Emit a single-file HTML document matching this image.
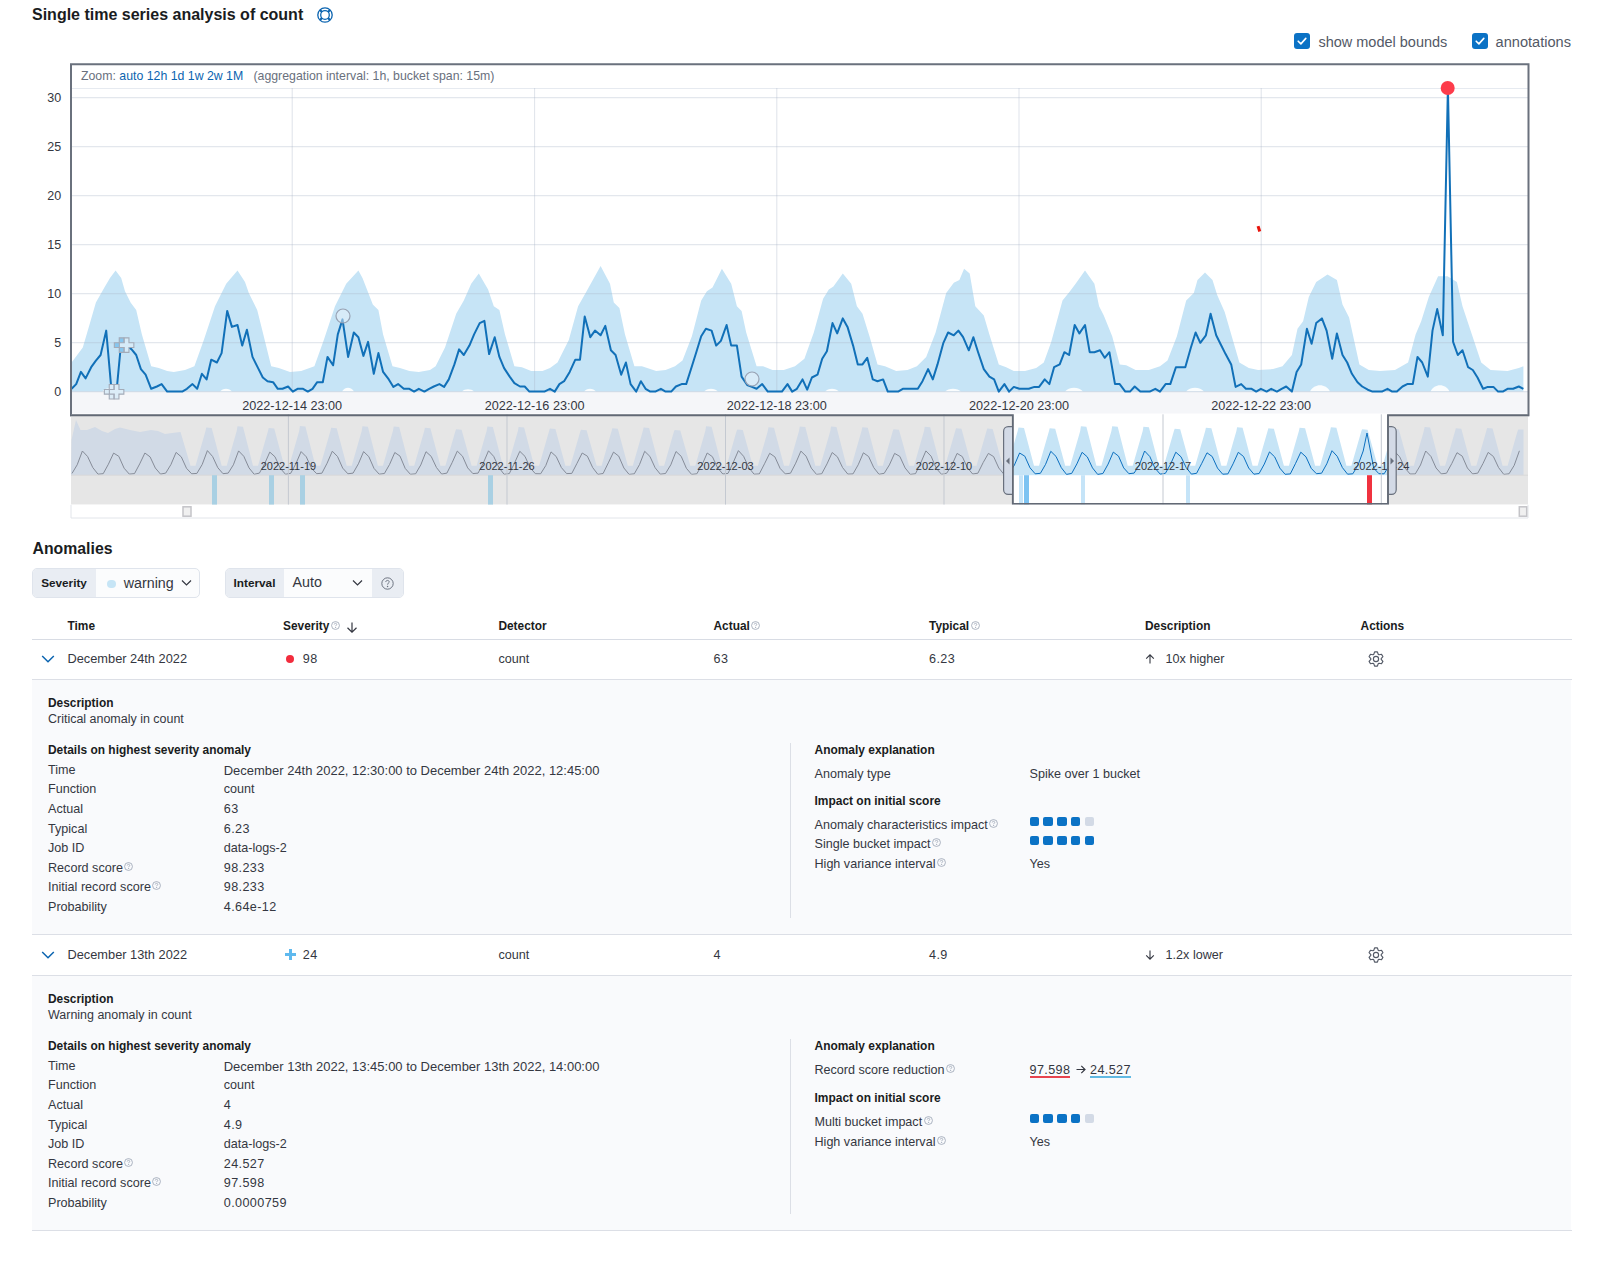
<!DOCTYPE html>
<html><head><meta charset="utf-8"><title>Single time series analysis</title>
<style>
html,body{margin:0;padding:0;background:#ffffff;width:1600px;height:1275px;overflow:hidden;position:relative}
body{font-family:'Liberation Sans', sans-serif}
.t{position:absolute;white-space:nowrap;line-height:1;font-family:'Liberation Sans', sans-serif}
svg text{font-family:'Liberation Sans', sans-serif}
</style></head><body>
<div class="t" style="left:32.00px;top:7.00px;font-size:16px;font-weight:bold;color:#1a1c21;">Single time series analysis of count</div>
<svg style="position:absolute;left:316px;top:6px" width="18" height="18" viewBox="0 0 18 18"><circle cx="9" cy="9" r="7.2" fill="none" stroke="#0b64b0" stroke-width="1.3"/><circle cx="9" cy="9" r="4.3" fill="none" stroke="#0b64b0" stroke-width="1.3"/><path d="M4,4 L6,6 M14,4 L12,6 M4,14 L6,12 M14,14 L12,12" stroke="#0b64b0" stroke-width="2.2"/></svg>
<svg style="position:absolute;left:1294px;top:33px" width="16" height="16" viewBox="0 0 16 16"><rect x="0" y="0" width="16" height="16" rx="3" fill="#0b72c5"/><path d="M4.2,8.2 L6.9,10.9 L11.8,5.4" fill="none" stroke="#fff" stroke-width="1.6" stroke-linecap="round" stroke-linejoin="round"/></svg>
<div class="t" style="left:1318.40px;top:35.00px;font-size:14.5px;font-weight:normal;color:#535966;">show model bounds</div>
<svg style="position:absolute;left:1471.5px;top:33px" width="16" height="16" viewBox="0 0 16 16"><rect x="0" y="0" width="16" height="16" rx="3" fill="#0b72c5"/><path d="M4.2,8.2 L6.9,10.9 L11.8,5.4" fill="none" stroke="#fff" stroke-width="1.6" stroke-linecap="round" stroke-linejoin="round"/></svg>
<div class="t" style="left:1495.60px;top:35.00px;font-size:14.58px;font-weight:normal;color:#535966;">annotations</div>
<svg width="1600" height="525" viewBox="0 0 1600 525" style="position:absolute;left:0;top:0">
<rect x="71" y="391.5" width="1457" height="22" fill="#f5f6f9"/>
<path d="M71.6,391.6 L71.6,362.5 L82.8,347.5 L89.4,325 L95.9,302.5 L104.4,287.5 L110,278.1 L115.6,270.6 L121.2,278.1 L125,291.2 L130.6,302.5 L136.2,310 L141.9,334.4 L151.2,366.2 L158.8,368.1 L167.2,370.9 L173.8,371.9 L185,370 L194.4,366.2 L203.8,340 L215,306.2 L226.2,283.8 L237.5,270.6 L245,281.9 L248.8,293.1 L257.2,310 L261.9,328.8 L271.2,366.2 L278.8,368.1 L290,371.9 L301.2,370.9 L314.4,366.2 L323.8,340 L335,306.2 L346.2,283.8 L358.4,270.6 L362.5,278.1 L372.8,304.4 L378.4,310 L383.1,334.4 L392.5,366.2 L400,368.1 L409.4,370.9 L418.8,371.9 L430,370 L435.6,366.2 L445,347.5 L456.2,313.8 L463.8,300.6 L471.2,283.8 L478.8,273.4 L488.1,289.4 L493.8,306.2 L499.4,310 L505,334.4 L514.4,366.2 L521.9,367.2 L531.2,370.9 L542.5,370.9 L550,368.1 L557.5,362.5 L568.8,340 L578.1,306.2 L585.6,293.1 L600.6,265.9 L610,283.8 L613.8,302.5 L619.4,308.1 L625,334.4 L634.4,366.2 L641.9,366.2 L656.2,370.9 L665.6,370 L675,366.2 L682.5,360.6 L691.9,336.2 L701.2,300.6 L706.9,291.2 L712.5,287.5 L721.9,268.8 L731.2,283.8 L736.9,306.2 L741.6,310.9 L746.2,332.5 L756.6,366.2 L763.1,366.2 L772.5,370 L783.8,370 L795,366.2 L804.4,358.8 L813.8,332.5 L823.1,298.8 L828.8,289.4 L833.4,286.6 L842.8,273.4 L851.2,283.8 L856.9,306.2 L862.5,313.8 L870,338.1 L877.5,364.4 L885,366.2 L896.2,370.9 L907.5,370 L916.9,366.2 L926.2,356.9 L935.6,332.5 L946.2,293.1 L953.8,282.8 L959.4,280 L964.1,268.8 L969.7,273.4 L975.3,306.2 L983.8,315.6 L989.4,334.4 L998.8,364.4 L1006.2,367.2 L1013.8,370.9 L1025,370.9 L1036.2,368.1 L1043.8,362.5 L1051.2,341.9 L1062.5,300.6 L1070,291.2 L1075.6,283.8 L1085,270.6 L1094.4,283.8 L1099.1,306.2 L1103.8,315.6 L1112.2,336.2 L1119.7,364.4 L1126.2,365.3 L1135.6,370 L1148.8,370 L1160,366.2 L1167.5,360.6 L1176.9,336.2 L1186.2,300.6 L1193.8,293.1 L1197.5,280 L1205,272.5 L1212.5,280 L1217.2,295 L1224.7,311.9 L1239.4,362.5 L1248.8,368.1 L1258.1,370 L1273.1,369.1 L1282.5,366.2 L1291.9,355 L1297.5,328.8 L1303.1,321.2 L1308.8,296.9 L1316.2,281.9 L1327.5,274.4 L1336.9,280 L1342.5,304.4 L1349.1,317.5 L1359.4,364.4 L1368.8,370 L1380,370.9 L1395,370 L1408.1,362.5 L1415.6,334.4 L1421.2,321.2 L1428.8,296.9 L1438.1,276.2 L1447.5,276.2 L1456.9,281.9 L1462.5,306.2 L1471.9,334.4 L1481.2,362.5 L1490.6,370 L1507.5,370.9 L1518.8,368.1 L1523.4,366.2 L1523.4,391.6Z" fill="#c6e4f6"/>
<path d="M102,391.6 C105.2,387.05 114.8,387.05 118,391.6 Z" fill="#ffffff" opacity="0.9"/>
<path d="M220,391.6 C222.4,387.70000000000005 229.6,387.70000000000005 232,391.6 Z" fill="#ffffff" opacity="0.9"/>
<path d="M342,391.6 C344.4,386.40000000000003 351.6,386.40000000000003 354,391.6 Z" fill="#ffffff" opacity="0.9"/>
<path d="M462,391.6 C464.4,388.35 471.6,388.35 474,391.6 Z" fill="#ffffff" opacity="0.9"/>
<path d="M584,391.6 C586.4,387.70000000000005 593.6,387.70000000000005 596,391.6 Z" fill="#ffffff" opacity="0.9"/>
<path d="M704,391.6 C706.8,387.70000000000005 715.2,387.70000000000005 718,391.6 Z" fill="#ffffff" opacity="0.9"/>
<path d="M825,391.6 C827.8,387.70000000000005 836.2,387.70000000000005 839,391.6 Z" fill="#ffffff" opacity="0.9"/>
<path d="M945,391.6 C948.2,387.70000000000005 957.8,387.70000000000005 961,391.6 Z" fill="#ffffff" opacity="0.9"/>
<path d="M1065,391.6 C1068.6,386.40000000000003 1079.4,386.40000000000003 1083,391.6 Z" fill="#ffffff" opacity="0.9"/>
<path d="M1186,391.6 C1189.6,386.40000000000003 1200.4,386.40000000000003 1204,391.6 Z" fill="#ffffff" opacity="0.9"/>
<path d="M1310,391.6 C1314.0,383.15000000000003 1326.0,383.15000000000003 1330,391.6 Z" fill="#ffffff" opacity="0.9"/>
<path d="M1430.5,391.6 C1434.3,383.15000000000003 1445.7,383.15000000000003 1449.5,391.6 Z" fill="#ffffff" opacity="0.9"/>
<line x1="71" y1="391.6" x2="1528" y2="391.6" stroke="#a9b6c9" stroke-opacity="0.33" stroke-width="1.2"/>
<line x1="71" y1="342.6" x2="1528" y2="342.6" stroke="#a9b6c9" stroke-opacity="0.33" stroke-width="1.2"/>
<line x1="71" y1="293.6" x2="1528" y2="293.6" stroke="#a9b6c9" stroke-opacity="0.33" stroke-width="1.2"/>
<line x1="71" y1="244.6" x2="1528" y2="244.6" stroke="#a9b6c9" stroke-opacity="0.33" stroke-width="1.2"/>
<line x1="71" y1="195.6" x2="1528" y2="195.6" stroke="#a9b6c9" stroke-opacity="0.33" stroke-width="1.2"/>
<line x1="71" y1="146.6" x2="1528" y2="146.6" stroke="#a9b6c9" stroke-opacity="0.33" stroke-width="1.2"/>
<line x1="71" y1="97.6" x2="1528" y2="97.6" stroke="#a9b6c9" stroke-opacity="0.33" stroke-width="1.2"/>
<line x1="71" y1="88.5" x2="1528" y2="88.5" stroke="#e6eaf0" stroke-width="1"/>
<line x1="292.2" y1="88" x2="292.2" y2="391.6" stroke="#a9b6c9" stroke-opacity="0.38" stroke-width="1"/>
<line x1="534.6" y1="88" x2="534.6" y2="391.6" stroke="#a9b6c9" stroke-opacity="0.38" stroke-width="1"/>
<line x1="776.8" y1="88" x2="776.8" y2="391.6" stroke="#a9b6c9" stroke-opacity="0.38" stroke-width="1"/>
<line x1="1019" y1="88" x2="1019" y2="391.6" stroke="#a9b6c9" stroke-opacity="0.38" stroke-width="1"/>
<line x1="1261.2" y1="88" x2="1261.2" y2="391.6" stroke="#a9b6c9" stroke-opacity="0.38" stroke-width="1"/>
<path d="M71.6,388.8 L76.2,384.1 L80.9,371.9 L85.6,378.4 L91.2,367.2 L95.9,360.6 L100.6,355 L106.2,330.6 L111.5,390.6 L116.6,390.6 L121.2,341.9 L126.9,345.6 L131.6,349.4 L136.2,355 L140.9,369.1 L145.6,374.7 L151.2,388.8 L156.9,386.5 L161.6,384.1 L167.2,391.6 L171.9,391.6 L177.5,391.6 L182.2,391.6 L186.9,388.8 L192.5,384.1 L197.2,388.8 L201.9,373.8 L206.6,379.4 L211.2,359.7 L216.9,362.5 L221.6,353.1 L227.2,310.9 L231.9,326.9 L237.5,325 L242.2,345.6 L246.9,329.7 L252.5,356.9 L258.1,368.1 L262.8,377.5 L267.5,381.2 L273.1,382.2 L277.8,388.8 L282.5,388.8 L288.1,386.5 L292.8,391.6 L297.5,388.8 L303.1,388.8 L307.8,391.6 L312.5,388.8 L317.2,382.2 L322.8,382.2 L327.5,356.9 L333.1,365.3 L337.8,334.4 L342.5,319.4 L348.1,356.9 L353.8,332.5 L358.4,337.2 L363.4,355.9 L368.1,341.9 L373.8,373.8 L378.4,353.1 L383.1,371.9 L388.8,379.4 L393.4,386.9 L398.1,384.1 L403.8,388.8 L409.4,388.8 L414.1,391.6 L418.8,388.8 L424.4,391.6 L429.1,388.8 L433.8,386.5 L439.4,384.1 L444.1,386.9 L448.8,379.4 L454.4,364.4 L459.1,349.4 L463.8,355 L469.4,345.6 L474.1,334.4 L479.7,323.1 L484.4,320.9 L489.1,354.1 L494.7,337.2 L499.4,356.9 L504.1,368.1 L509.7,376.6 L514.4,383.1 L520,386.5 L524.7,386.5 L529.4,391.6 L535,391.6 L539.7,391.6 L544.4,391.6 L550,388.8 L554.7,391.6 L559.4,384.1 L564.1,381.2 L569.7,371.9 L575.3,359.7 L580,359.7 L584.7,316.6 L590.3,337.2 L595,330.6 L600.6,335.3 L605.3,325.9 L610.9,350.3 L615.6,355 L621.2,374.7 L625.9,362.5 L630.6,384.1 L636.2,391.6 L640.9,381.2 L645.6,388.8 L650.3,391.6 L655.3,391.6 L660.9,388.8 L665.6,391.6 L671.2,391.6 L675.9,386.5 L681.6,384.1 L686.2,384.1 L691.9,366.2 L696.6,351.2 L701.2,336.2 L705.9,328.8 L711.6,330.6 L716.2,345.6 L720.9,340.9 L726.6,325 L731.2,345.6 L736.9,345.6 L741.6,376.6 L747.2,385 L751.9,386.9 L756.6,388.8 L762.2,384.1 L767.8,391.6 L772.5,391.6 L777.2,391.6 L781.9,391.6 L787.5,384.1 L792.2,391.6 L796.9,388.8 L802.5,379.4 L807.2,389.7 L811.9,377.5 L817.5,374.7 L822.2,358.8 L826.9,351.2 L832.5,323.1 L837.2,333.4 L842.8,318.4 L847.5,326.9 L853.1,345.6 L857.8,364.4 L862.5,364.4 L867.2,357.8 L872.8,379.4 L877.5,381.2 L883.1,379.4 L887.8,391.6 L892.5,391.6 L898.1,391.6 L902.8,388.8 L907.5,388.8 L913.1,388.8 L917.8,388.8 L922.5,381.2 L928.1,369.1 L932.8,379.4 L937.5,364.4 L943.4,342.8 L948.1,332.5 L953.8,335.3 L958.4,330.6 L963.1,337.2 L968.8,350.3 L973.4,337.2 L978.1,352.2 L983.8,369.1 L989.4,376.6 L994.1,379.4 L998.8,391.6 L1004.4,384.1 L1009.1,391.6 L1013.8,386.9 L1019.4,388.8 L1024.1,388.8 L1028.8,388.8 L1034.4,386.9 L1039.1,386.9 L1044.7,379.4 L1049.4,384.1 L1054.1,367.2 L1059.7,364.4 L1064.4,352.2 L1069.1,355 L1074.7,325 L1079.4,333.4 L1085,325 L1089.7,352.2 L1094.4,352.2 L1100,350.3 L1104.7,357.8 L1109.4,352.2 L1115,384.1 L1119.7,384.1 L1125.3,391.6 L1130,391.6 L1134.7,386.5 L1140.3,391.6 L1145,391.6 L1149.7,391.6 L1155.3,388.8 L1160,391.6 L1165.6,384.1 L1170.3,384.1 L1175.9,367.2 L1180.6,367.2 L1185.3,367.2 L1190.9,347.5 L1195.6,332.5 L1200.3,342.8 L1205.9,335.3 L1210.6,313.8 L1216.2,335.3 L1220.9,344.7 L1225.6,354.1 L1231.2,364.4 L1235.6,386.9 L1241.2,384.1 L1245.9,388.8 L1251.6,388.8 L1256.2,391.6 L1260.9,388.8 L1266.6,391.6 L1271.2,388.8 L1276.9,391.6 L1281.6,388.8 L1286.2,386.5 L1291.9,391.6 L1296.6,371.9 L1301.2,364.4 L1306.9,328.8 L1311.6,343.8 L1316.2,323.1 L1321.9,318.4 L1326.6,330.6 L1332.2,358.8 L1336.9,333.4 L1342.5,355 L1347.2,362.5 L1351.9,373.8 L1357.5,382.2 L1362.2,386.5 L1367.8,389.7 L1372.5,391.6 L1377.2,391.6 L1381.9,391.6 L1387.5,388.8 L1392.2,391.6 L1396.9,391.6 L1402.5,386.5 L1407.2,384.1 L1412.8,384.1 L1417.5,356.9 L1422.2,362.5 L1427.8,376.6 L1432.5,330.6 L1437.2,309.1 L1442.8,335.3 L1447.9,87.2 L1453.1,341.9 L1457.8,355 L1462.5,350.3 L1468.1,367.2 L1472.8,370 L1477.5,377.5 L1483.1,388.8 L1487.8,386.9 L1493.4,386.9 L1498.1,391.6 L1502.8,391.6 L1507.5,388.8 L1513.1,388.8 L1518.8,386.5 L1523.4,388.8" fill="none" stroke="#1170b8" stroke-width="2" stroke-linejoin="round"/>
<circle cx="343" cy="316" r="7" fill="#e9f2f9" fill-opacity="0.5" stroke="#98a2b3" stroke-width="1.2"/>
<circle cx="752" cy="379" r="7" fill="#e9f2f9" fill-opacity="0.5" stroke="#98a2b3" stroke-width="1.2"/>
<path d="M109.25,384.55 H113.94999999999999 V389.45 H118.85 V394.15000000000003 H113.94999999999999 V399.05 H109.25 V394.15000000000003 H104.35 V389.45 H109.25 Z" fill="#dcedf8" stroke="#a3abb8" stroke-width="1.1"/>
<path d="M114.25,384.55 H118.94999999999999 V389.45 H123.85 V394.15000000000003 H118.94999999999999 V399.05 H114.25 V394.15000000000003 H109.35 V389.45 H114.25 Z" fill="#dcedf8" stroke="#a3abb8" stroke-width="1.1"/>
<path d="M119.25,337.85 H123.94999999999999 V342.75 H128.85 V347.45000000000005 H123.94999999999999 V352.35 H119.25 V347.45000000000005 H114.35 V342.75 H119.25 Z" fill="#86c6ef" stroke="#a3abb8" stroke-width="1.1"/>
<path d="M124.25,337.85 H128.95 V342.75 H133.85 V347.45000000000005 H128.95 V352.35 H124.25 V347.45000000000005 H119.35 V342.75 H124.25 Z" fill="#d6ebf8" stroke="#a3abb8" stroke-width="1.1"/>
<circle cx="1447.7" cy="88" r="7" fill="#fd3c4b"/>
<path d="M1256.6,226.6 l2.9,-0.8 l1.7,5.3 l-2.9,0.9 Z" fill="#e8140c"/>
<path d="M71,416.2 V64.3 H1528.5 V416.2" fill="none" stroke="#6a717d" stroke-width="2"/>
<defs><clipPath id="cin"><rect x="1013" y="414.3" width="375" height="90.5"/></clipPath>
<clipPath id="cout"><path d="M71,414.3 H1013 V504.8 H71 Z M1388,414.3 H1528 V504.8 H1388 Z"/></clipPath></defs>
<g clip-path="url(#cout)"><rect x="71" y="414.3" width="1457" height="90.5" fill="#e6e6e6"/><path d="M71,475.2 L71.5,440 L76,420 L80.5,430 L87,430 L95,427 L102,431 L108,433 L115,429 L120,427.5 L130,430 L140,432 L151,430 L158,431 L165,434 L172,433 L180.5,432 L190.5,465.7 L195.5,465.7 L205.5,431 L206.2,427.5 L211.7,428 L221.7,465.7 L226.7,465.7 L236.7,431 L237.5,426.2 L243,426.7 L253,465.7 L258,465.7 L268,431 L268.7,428 L274.2,428.5 L284.2,465.7 L289.2,465.7 L299.2,431 L299.9,426.1 L305.4,426.6 L315.4,465.7 L320.4,465.7 L330.4,431 L331.2,427.7 L336.7,428.2 L346.7,465.7 L351.7,465.7 L361.7,431 L362.4,426.3 L367.9,426.8 L377.9,465.7 L382.9,465.7 L392.9,431 L393.7,426.4 L399.2,426.9 L409.2,465.7 L414.2,465.7 L424.2,431 L424.9,427.7 L430.4,428.2 L440.4,465.7 L445.4,465.7 L455.4,431 L456.1,429.3 L461.6,429.8 L471.6,465.7 L476.6,465.7 L486.6,431 L487.4,426.5 L492.9,427 L502.9,465.7 L507.9,465.7 L517.9,431 L518.6,426.9 L524.1,427.4 L534.1,465.7 L539.1,465.7 L549.1,431 L549.9,428.5 L555.4,429 L565.4,465.7 L570.4,465.7 L580.4,431 L581.1,429.8 L586.6,430.3 L596.6,465.7 L601.6,465.7 L611.6,431 L612.3,428.3 L617.8,428.8 L627.8,465.7 L632.8,465.7 L642.8,431 L643.6,427.6 L649.1,428.1 L659.1,465.7 L664.1,465.7 L674.1,431 L674.8,429.9 L680.3,430.4 L690.3,465.7 L695.3,465.7 L705.3,431 L706.1,426.2 L711.6,426.7 L721.6,465.7 L726.6,465.7 L736.6,431 L737.3,429.4 L742.8,429.9 L752.8,465.7 L757.8,465.7 L767.8,431 L768.5,427.2 L774,427.7 L784,465.7 L789,465.7 L799,431 L799.8,426.6 L805.3,427.1 L815.3,465.7 L820.3,465.7 L830.3,431 L831,426.5 L836.5,427 L846.5,465.7 L851.5,465.7 L861.5,431 L862.3,427.2 L867.8,427.7 L877.8,465.7 L882.8,465.7 L892.8,431 L893.5,429.3 L899,429.8 L909,465.7 L914,465.7 L924,431 L924.7,426.7 L930.2,427.2 L940.2,465.7 L945.2,465.7 L955.2,431 L956,428.3 L961.5,428.8 L971.5,465.7 L976.5,465.7 L986.5,431 L987.2,428.6 L992.7,429.1 L1002.7,465.7 L1007.7,465.7 L1017.7,431 L1018.5,427.5 L1024,428 L1034,465.7 L1039,465.7 L1049,431 L1049.7,428.2 L1055.2,428.7 L1065.2,465.7 L1070.2,465.7 L1080.2,431 L1080.9,426.3 L1086.4,426.8 L1096.4,465.7 L1101.4,465.7 L1111.4,431 L1112.2,426.2 L1117.7,426.7 L1127.7,465.7 L1132.7,465.7 L1142.7,431 L1143.4,426.8 L1148.9,427.3 L1158.9,465.7 L1163.9,465.7 L1173.9,431 L1174.7,428.7 L1180.2,429.2 L1190.2,465.7 L1195.2,465.7 L1205.2,431 L1205.9,427.7 L1211.4,428.2 L1221.4,465.7 L1226.4,465.7 L1236.4,431 L1237.1,427.3 L1242.6,427.8 L1252.6,465.7 L1257.6,465.7 L1267.6,431 L1268.4,428.3 L1273.9,428.8 L1283.9,465.7 L1288.9,465.7 L1298.9,431 L1299.6,427.8 L1305.1,428.3 L1315.1,465.7 L1320.1,465.7 L1330.1,431 L1330.9,427.2 L1336.4,427.7 L1346.4,465.7 L1351.4,465.7 L1361.4,431 L1362.1,429.2 L1367.6,429.7 L1377.6,465.7 L1382.6,465.7 L1392.6,431 L1393.3,428.8 L1398.8,429.3 L1408.8,465.7 L1413.8,465.7 L1423.8,431 L1424.6,427 L1430.1,427.5 L1440.1,465.7 L1445.1,465.7 L1455.1,431 L1455.8,428.3 L1461.3,428.8 L1471.3,465.7 L1476.3,465.7 L1486.3,431 L1487.1,428.1 L1492.6,428.6 L1502.6,465.7 L1507.6,465.7 L1517.6,431 L1518.3,429.5 L1523.5,429.5 L1523.5,475.2Z" fill="#d1dae6"/><path d="M72,473.4 L77.2,464.8 L82.4,451 L87.6,456.5 L92.8,467.6 L98,474.2 L103.2,473.7 L108.4,464.2 L113.6,453.1 L118.8,456.3 L124.1,468.2 L129.3,474.1 L134.5,473.6 L139.7,463.9 L144.9,453 L150.1,456.9 L155.3,468 L160.5,474.1 L165.7,473.1 L170.9,464.6 L176.1,452.4 L181.3,456.9 L186.5,468.3 L191.7,473.8 L196.9,473.4 L202.2,464.5 L207.4,450.6 L212.6,456.5 L217.8,467.7 L223,473.7 L228.2,473.1 L233.4,464.8 L238.6,450.9 L243.8,456.3 L249,467.9 L254.2,474.3 L259.4,473.1 L264.6,463.8 L269.8,452.1 L275,456.8 L280.3,468.3 L285.5,474.3 L290.7,473.3 L295.9,463.7 L301.1,451.6 L306.3,456.8 L311.5,468.4 L316.7,473.7 L321.9,473.2 L327.1,463.2 L332.3,451.2 L337.5,456.5 L342.7,468.1 L347.9,473.8 L353.1,473.1 L358.4,463.8 L363.6,451.6 L368.8,456.6 L374,468.4 L379.2,474.2 L384.4,473.5 L389.6,464.4 L394.8,452.5 L400,456.1 L405.2,468.4 L410.4,474.3 L415.6,473.8 L420.8,464.9 L426,451.7 L431.2,456.4 L436.5,467.6 L441.7,474.1 L446.9,473.1 L452.1,462.7 L457.3,451.1 L462.5,456.2 L467.7,467.9 L472.9,473.6 L478.1,473.1 L483.3,463 L488.5,450.8 L493.7,456.4 L498.9,467.6 L504.1,474.3 L509.3,473.6 L514.6,462.9 L519.8,451.3 L525,456.4 L530.2,467.9 L535.4,473.7 L540.6,473.8 L545.8,465.5 L551,451.9 L556.2,456.5 L561.4,467.6 L566.6,473.6 L571.8,473.4 L577,463.3 L582.2,453 L587.4,456.2 L592.7,467.6 L597.9,474.4 L603.1,473.5 L608.3,462.9 L613.5,452.1 L618.7,456.1 L623.9,468 L629.1,474.4 L634.3,473.8 L639.5,464.6 L644.7,451.3 L649.9,456.4 L655.1,467.7 L660.3,474.2 L665.5,473.5 L670.8,464.8 L676,451.5 L681.2,456.3 L686.4,468.3 L691.6,474.4 L696.8,473.8 L702,464.9 L707.2,453 L712.4,456.7 L717.6,467.8 L722.8,474 L728,473.4 L733.2,462.6 L738.4,450.6 L743.6,456.3 L748.9,467.8 L754.1,474.2 L759.3,473.9 L764.5,463.8 L769.7,453.3 L774.9,456.9 L780.1,468.4 L785.3,473.9 L790.5,473.2 L795.7,463.2 L800.9,451.1 L806.1,456.2 L811.3,468.1 L816.5,474.4 L821.7,473.8 L827,463.9 L832.2,452.5 L837.4,456.8 L842.6,467.6 L847.8,474.1 L853,473.9 L858.2,464.8 L863.4,452.8 L868.6,456.5 L873.8,467.7 L879,474.3 L884.2,473.3 L889.4,464.9 L894.6,453.4 L899.8,456.4 L905.1,467.9 L910.3,474.4 L915.5,473.7 L920.7,463 L925.9,450.9 L931.1,456.2 L936.3,468.4 L941.5,474.3 L946.7,473.2 L951.9,465 L957.1,453.4 L962.3,456.6 L967.5,467.9 L972.7,474 L977.9,473.2 L983.2,462.5 L988.4,453.4 L993.6,456.6 L998.8,468 L1004,474.4 L1009.2,473.4 L1014.4,465.1 L1019.6,453 L1024.8,456.2 L1030,467.8 L1035.2,473.8 L1040.4,473.3 L1045.6,464.3 L1050.8,451.3 L1056,456.4 L1061.3,467.7 L1066.5,474.4 L1071.7,473.4 L1076.9,463.9 L1082.1,452.3 L1087.3,456.9 L1092.5,467.9 L1097.7,474.4 L1102.9,473.5 L1108.1,464.1 L1113.3,452.1 L1118.5,456.1 L1123.7,467.9 L1128.9,473.7 L1134.1,473.1 L1139.4,464.9 L1144.6,451 L1149.8,456.5 L1155,468.2 L1160.2,474.1 L1165.4,473.3 L1170.6,464.1 L1175.8,452.2 L1181,456.8 L1186.2,467.6 L1191.4,474.1 L1196.6,473.3 L1201.8,463.3 L1207,452.8 L1212.2,456.5 L1217.5,468.1 L1222.7,474.2 L1227.9,473.9 L1233.1,463.8 L1238.3,452.3 L1243.5,456.5 L1248.7,468 L1253.9,474.2 L1259.1,473.5 L1264.3,464.1 L1269.5,451.9 L1274.7,456.9 L1279.9,468.2 L1285.1,474.3 L1290.3,473.9 L1295.6,463.3 L1300.8,452.2 L1306,456.9 L1311.2,468.3 L1316.4,473.7 L1321.6,473.2 L1326.8,463.8 L1332,450.7 L1337.2,456.3 L1342.4,467.6 L1347.6,474.2 L1352.8,473.8 L1358,465.2 L1363.2,451 L1367,433 L1373.7,468.1 L1378.9,473.7 L1384.1,473.8 L1389.3,465.4 L1394.5,451.2 L1399.7,456.9 L1404.9,467.9 L1410.1,474 L1415.3,473.9 L1420.5,465 L1425.7,451 L1430.9,456.4 L1436.1,468 L1441.3,473.9 L1446.5,473.2 L1451.8,463.5 L1457,452.7 L1462.2,456.1 L1467.4,468 L1472.6,473.9 L1477.8,473.1 L1483,463.5 L1488.2,452.4 L1493.4,456.5 L1498.6,467.6 L1503.8,474.4 L1509,473.8 L1514.2,465.4 L1519.4,450.8" fill="none" stroke="#858b97" stroke-width="1"/></g>
<g clip-path="url(#cin)"><rect x="71" y="414.3" width="1457" height="90.5" fill="#ffffff"/><path d="M71,475.2 L71.5,440 L76,420 L80.5,430 L87,430 L95,427 L102,431 L108,433 L115,429 L120,427.5 L130,430 L140,432 L151,430 L158,431 L165,434 L172,433 L180.5,432 L190.5,465.7 L195.5,465.7 L205.5,431 L206.2,427.5 L211.7,428 L221.7,465.7 L226.7,465.7 L236.7,431 L237.5,426.2 L243,426.7 L253,465.7 L258,465.7 L268,431 L268.7,428 L274.2,428.5 L284.2,465.7 L289.2,465.7 L299.2,431 L299.9,426.1 L305.4,426.6 L315.4,465.7 L320.4,465.7 L330.4,431 L331.2,427.7 L336.7,428.2 L346.7,465.7 L351.7,465.7 L361.7,431 L362.4,426.3 L367.9,426.8 L377.9,465.7 L382.9,465.7 L392.9,431 L393.7,426.4 L399.2,426.9 L409.2,465.7 L414.2,465.7 L424.2,431 L424.9,427.7 L430.4,428.2 L440.4,465.7 L445.4,465.7 L455.4,431 L456.1,429.3 L461.6,429.8 L471.6,465.7 L476.6,465.7 L486.6,431 L487.4,426.5 L492.9,427 L502.9,465.7 L507.9,465.7 L517.9,431 L518.6,426.9 L524.1,427.4 L534.1,465.7 L539.1,465.7 L549.1,431 L549.9,428.5 L555.4,429 L565.4,465.7 L570.4,465.7 L580.4,431 L581.1,429.8 L586.6,430.3 L596.6,465.7 L601.6,465.7 L611.6,431 L612.3,428.3 L617.8,428.8 L627.8,465.7 L632.8,465.7 L642.8,431 L643.6,427.6 L649.1,428.1 L659.1,465.7 L664.1,465.7 L674.1,431 L674.8,429.9 L680.3,430.4 L690.3,465.7 L695.3,465.7 L705.3,431 L706.1,426.2 L711.6,426.7 L721.6,465.7 L726.6,465.7 L736.6,431 L737.3,429.4 L742.8,429.9 L752.8,465.7 L757.8,465.7 L767.8,431 L768.5,427.2 L774,427.7 L784,465.7 L789,465.7 L799,431 L799.8,426.6 L805.3,427.1 L815.3,465.7 L820.3,465.7 L830.3,431 L831,426.5 L836.5,427 L846.5,465.7 L851.5,465.7 L861.5,431 L862.3,427.2 L867.8,427.7 L877.8,465.7 L882.8,465.7 L892.8,431 L893.5,429.3 L899,429.8 L909,465.7 L914,465.7 L924,431 L924.7,426.7 L930.2,427.2 L940.2,465.7 L945.2,465.7 L955.2,431 L956,428.3 L961.5,428.8 L971.5,465.7 L976.5,465.7 L986.5,431 L987.2,428.6 L992.7,429.1 L1002.7,465.7 L1007.7,465.7 L1017.7,431 L1018.5,427.5 L1024,428 L1034,465.7 L1039,465.7 L1049,431 L1049.7,428.2 L1055.2,428.7 L1065.2,465.7 L1070.2,465.7 L1080.2,431 L1080.9,426.3 L1086.4,426.8 L1096.4,465.7 L1101.4,465.7 L1111.4,431 L1112.2,426.2 L1117.7,426.7 L1127.7,465.7 L1132.7,465.7 L1142.7,431 L1143.4,426.8 L1148.9,427.3 L1158.9,465.7 L1163.9,465.7 L1173.9,431 L1174.7,428.7 L1180.2,429.2 L1190.2,465.7 L1195.2,465.7 L1205.2,431 L1205.9,427.7 L1211.4,428.2 L1221.4,465.7 L1226.4,465.7 L1236.4,431 L1237.1,427.3 L1242.6,427.8 L1252.6,465.7 L1257.6,465.7 L1267.6,431 L1268.4,428.3 L1273.9,428.8 L1283.9,465.7 L1288.9,465.7 L1298.9,431 L1299.6,427.8 L1305.1,428.3 L1315.1,465.7 L1320.1,465.7 L1330.1,431 L1330.9,427.2 L1336.4,427.7 L1346.4,465.7 L1351.4,465.7 L1361.4,431 L1362.1,429.2 L1367.6,429.7 L1377.6,465.7 L1382.6,465.7 L1392.6,431 L1393.3,428.8 L1398.8,429.3 L1408.8,465.7 L1413.8,465.7 L1423.8,431 L1424.6,427 L1430.1,427.5 L1440.1,465.7 L1445.1,465.7 L1455.1,431 L1455.8,428.3 L1461.3,428.8 L1471.3,465.7 L1476.3,465.7 L1486.3,431 L1487.1,428.1 L1492.6,428.6 L1502.6,465.7 L1507.6,465.7 L1517.6,431 L1518.3,429.5 L1523.5,429.5 L1523.5,475.2Z" fill="#c6e4f6"/><path d="M72,473.4 L77.2,464.8 L82.4,451 L87.6,456.5 L92.8,467.6 L98,474.2 L103.2,473.7 L108.4,464.2 L113.6,453.1 L118.8,456.3 L124.1,468.2 L129.3,474.1 L134.5,473.6 L139.7,463.9 L144.9,453 L150.1,456.9 L155.3,468 L160.5,474.1 L165.7,473.1 L170.9,464.6 L176.1,452.4 L181.3,456.9 L186.5,468.3 L191.7,473.8 L196.9,473.4 L202.2,464.5 L207.4,450.6 L212.6,456.5 L217.8,467.7 L223,473.7 L228.2,473.1 L233.4,464.8 L238.6,450.9 L243.8,456.3 L249,467.9 L254.2,474.3 L259.4,473.1 L264.6,463.8 L269.8,452.1 L275,456.8 L280.3,468.3 L285.5,474.3 L290.7,473.3 L295.9,463.7 L301.1,451.6 L306.3,456.8 L311.5,468.4 L316.7,473.7 L321.9,473.2 L327.1,463.2 L332.3,451.2 L337.5,456.5 L342.7,468.1 L347.9,473.8 L353.1,473.1 L358.4,463.8 L363.6,451.6 L368.8,456.6 L374,468.4 L379.2,474.2 L384.4,473.5 L389.6,464.4 L394.8,452.5 L400,456.1 L405.2,468.4 L410.4,474.3 L415.6,473.8 L420.8,464.9 L426,451.7 L431.2,456.4 L436.5,467.6 L441.7,474.1 L446.9,473.1 L452.1,462.7 L457.3,451.1 L462.5,456.2 L467.7,467.9 L472.9,473.6 L478.1,473.1 L483.3,463 L488.5,450.8 L493.7,456.4 L498.9,467.6 L504.1,474.3 L509.3,473.6 L514.6,462.9 L519.8,451.3 L525,456.4 L530.2,467.9 L535.4,473.7 L540.6,473.8 L545.8,465.5 L551,451.9 L556.2,456.5 L561.4,467.6 L566.6,473.6 L571.8,473.4 L577,463.3 L582.2,453 L587.4,456.2 L592.7,467.6 L597.9,474.4 L603.1,473.5 L608.3,462.9 L613.5,452.1 L618.7,456.1 L623.9,468 L629.1,474.4 L634.3,473.8 L639.5,464.6 L644.7,451.3 L649.9,456.4 L655.1,467.7 L660.3,474.2 L665.5,473.5 L670.8,464.8 L676,451.5 L681.2,456.3 L686.4,468.3 L691.6,474.4 L696.8,473.8 L702,464.9 L707.2,453 L712.4,456.7 L717.6,467.8 L722.8,474 L728,473.4 L733.2,462.6 L738.4,450.6 L743.6,456.3 L748.9,467.8 L754.1,474.2 L759.3,473.9 L764.5,463.8 L769.7,453.3 L774.9,456.9 L780.1,468.4 L785.3,473.9 L790.5,473.2 L795.7,463.2 L800.9,451.1 L806.1,456.2 L811.3,468.1 L816.5,474.4 L821.7,473.8 L827,463.9 L832.2,452.5 L837.4,456.8 L842.6,467.6 L847.8,474.1 L853,473.9 L858.2,464.8 L863.4,452.8 L868.6,456.5 L873.8,467.7 L879,474.3 L884.2,473.3 L889.4,464.9 L894.6,453.4 L899.8,456.4 L905.1,467.9 L910.3,474.4 L915.5,473.7 L920.7,463 L925.9,450.9 L931.1,456.2 L936.3,468.4 L941.5,474.3 L946.7,473.2 L951.9,465 L957.1,453.4 L962.3,456.6 L967.5,467.9 L972.7,474 L977.9,473.2 L983.2,462.5 L988.4,453.4 L993.6,456.6 L998.8,468 L1004,474.4 L1009.2,473.4 L1014.4,465.1 L1019.6,453 L1024.8,456.2 L1030,467.8 L1035.2,473.8 L1040.4,473.3 L1045.6,464.3 L1050.8,451.3 L1056,456.4 L1061.3,467.7 L1066.5,474.4 L1071.7,473.4 L1076.9,463.9 L1082.1,452.3 L1087.3,456.9 L1092.5,467.9 L1097.7,474.4 L1102.9,473.5 L1108.1,464.1 L1113.3,452.1 L1118.5,456.1 L1123.7,467.9 L1128.9,473.7 L1134.1,473.1 L1139.4,464.9 L1144.6,451 L1149.8,456.5 L1155,468.2 L1160.2,474.1 L1165.4,473.3 L1170.6,464.1 L1175.8,452.2 L1181,456.8 L1186.2,467.6 L1191.4,474.1 L1196.6,473.3 L1201.8,463.3 L1207,452.8 L1212.2,456.5 L1217.5,468.1 L1222.7,474.2 L1227.9,473.9 L1233.1,463.8 L1238.3,452.3 L1243.5,456.5 L1248.7,468 L1253.9,474.2 L1259.1,473.5 L1264.3,464.1 L1269.5,451.9 L1274.7,456.9 L1279.9,468.2 L1285.1,474.3 L1290.3,473.9 L1295.6,463.3 L1300.8,452.2 L1306,456.9 L1311.2,468.3 L1316.4,473.7 L1321.6,473.2 L1326.8,463.8 L1332,450.7 L1337.2,456.3 L1342.4,467.6 L1347.6,474.2 L1352.8,473.8 L1358,465.2 L1363.2,451 L1367,433 L1373.7,468.1 L1378.9,473.7 L1384.1,473.8 L1389.3,465.4 L1394.5,451.2 L1399.7,456.9 L1404.9,467.9 L1410.1,474 L1415.3,473.9 L1420.5,465 L1425.7,451 L1430.9,456.4 L1436.1,468 L1441.3,473.9 L1446.5,473.2 L1451.8,463.5 L1457,452.7 L1462.2,456.1 L1467.4,468 L1472.6,473.9 L1477.8,473.1 L1483,463.5 L1488.2,452.4 L1493.4,456.5 L1498.6,467.6 L1503.8,474.4 L1509,473.8 L1514.2,465.4 L1519.4,450.8" fill="none" stroke="#0b6fbf" stroke-width="1"/></g>
<line x1="71" y1="475.2" x2="1528" y2="475.2" stroke="#d9d9d9" stroke-width="1" clip-path="url(#cout)"/>
<line x1="288.4" y1="414.3" x2="288.4" y2="504.8" stroke="#c4c9d1" stroke-width="1"/>
<line x1="507" y1="414.3" x2="507" y2="504.8" stroke="#c4c9d1" stroke-width="1"/>
<line x1="725.5" y1="414.3" x2="725.5" y2="504.8" stroke="#c4c9d1" stroke-width="1"/>
<line x1="944" y1="414.3" x2="944" y2="504.8" stroke="#c4c9d1" stroke-width="1"/>
<line x1="1163" y1="414.3" x2="1163" y2="504.8" stroke="#c4c9d1" stroke-width="1"/>
<line x1="1381.3" y1="414.3" x2="1381.3" y2="504.8" stroke="#c4c9d1" stroke-width="1"/>
<rect x="212" y="475.2" width="5" height="29.600000000000023" fill="#a9d0e3"/>
<rect x="269" y="475.2" width="5" height="29.600000000000023" fill="#a9d0e3"/>
<rect x="300" y="475.2" width="5" height="29.600000000000023" fill="#a9d0e3"/>
<rect x="488" y="475.2" width="5" height="29.600000000000023" fill="#a9d0e3"/>
<rect x="1019" y="475.2" width="4" height="29.600000000000023" fill="#c5e4f8"/>
<rect x="1024" y="475.2" width="5" height="29.600000000000023" fill="#7cc3f2"/>
<rect x="1081" y="475.2" width="4" height="29.600000000000023" fill="#c5e4f8"/>
<rect x="1186" y="475.2" width="4" height="29.600000000000023" fill="#c5e4f8"/>
<rect x="1367" y="475.2" width="5" height="29.600000000000023" fill="#f0323f"/>
<text x="288.4" y="470" text-anchor="middle" font-family="Liberation Sans" font-size="11" fill="#343741">2022-11-19</text>
<text x="507" y="470" text-anchor="middle" font-family="Liberation Sans" font-size="11" fill="#343741">2022-11-26</text>
<text x="725.5" y="470" text-anchor="middle" font-family="Liberation Sans" font-size="11" fill="#343741">2022-12-03</text>
<text x="944" y="470" text-anchor="middle" font-family="Liberation Sans" font-size="11" fill="#343741">2022-12-10</text>
<text x="1163" y="470" text-anchor="middle" font-family="Liberation Sans" font-size="11" fill="#343741">2022-12-17</text>
<text x="1381.3" y="470" text-anchor="middle" font-family="Liberation Sans" font-size="11" fill="#343741">2022-12-24</text>
<path d="M70,415.25 H1012.85 V503.9 H1388 V415.25 H1528.5" fill="none" stroke="#626975" stroke-width="1.9"/>
<path d="M1012,426.6 H1008.2 a4.6,4.6 0 0 0 -4.6,4.6 V489.8 a4.6,4.6 0 0 0 4.6,4.6 H1012" fill="#d3dae6" stroke="#69707d" stroke-width="1.2"/>
<path d="M1389,426.6 H1391.6 a4.6,4.6 0 0 1 4.6,4.6 V489.8 a4.6,4.6 0 0 1 -4.6,4.6 H1389" fill="#d3dae6" stroke="#69707d" stroke-width="1.2"/>
<path d="M1009.5,457.5 v7 l-3.5,-3.5 Z" fill="#69707d"/>
<path d="M1390.5,457.5 v7 l3.5,-3.5 Z" fill="#69707d"/>
<path d="M71,504.8 V518 H1528 V504.8" fill="#ffffff" stroke="#e2e5ea" stroke-width="1"/>
<rect x="183" y="506.8" width="8" height="9.4" fill="#f0f0f0" stroke="#c4c4c8" stroke-width="1.5"/>
<rect x="1519.3" y="506.8" width="7.4" height="9.4" fill="#f0f0f0" stroke="#c4c4c8" stroke-width="1.5"/>
</svg>
<div class="t" style="left:81.00px;top:70.00px;font-size:12.32px;font-weight:normal;color:#69707d;">Zoom: <span style="color:#0b64b0">auto 12h 1d 1w 2w 1M</span>&nbsp;&nbsp; (aggregation interval: 1h, bucket span: 15m)</div>
<div class="t" style="left:0px;width:61.2px;text-align:right;top:386px;font-size:12.5px;color:#343741">0</div>
<div class="t" style="left:0px;width:61.2px;text-align:right;top:337px;font-size:12.5px;color:#343741">5</div>
<div class="t" style="left:0px;width:61.2px;text-align:right;top:288px;font-size:12.5px;color:#343741">10</div>
<div class="t" style="left:0px;width:61.2px;text-align:right;top:239px;font-size:12.5px;color:#343741">15</div>
<div class="t" style="left:0px;width:61.2px;text-align:right;top:190px;font-size:12.5px;color:#343741">20</div>
<div class="t" style="left:0px;width:61.2px;text-align:right;top:141px;font-size:12.5px;color:#343741">25</div>
<div class="t" style="left:0px;width:61.2px;text-align:right;top:92px;font-size:12.5px;color:#343741">30</div>
<div class="t" style="left:232.2px;width:120px;text-align:center;top:400px;font-size:12.67px;color:#343741">2022-12-14 23:00</div>
<div class="t" style="left:474.6px;width:120px;text-align:center;top:400px;font-size:12.67px;color:#343741">2022-12-16 23:00</div>
<div class="t" style="left:716.8px;width:120px;text-align:center;top:400px;font-size:12.67px;color:#343741">2022-12-18 23:00</div>
<div class="t" style="left:959px;width:120px;text-align:center;top:400px;font-size:12.67px;color:#343741">2022-12-20 23:00</div>
<div class="t" style="left:1201.2px;width:120px;text-align:center;top:400px;font-size:12.67px;color:#343741">2022-12-22 23:00</div>
<div class="t" style="left:32.50px;top:541.00px;font-size:15.82px;font-weight:bold;color:#1a1c21;">Anomalies</div>
<div style="position:absolute;left:32px;top:567.5px;width:167.5px;height:30px;box-sizing:border-box;border:1px solid #dfe4ec;border-radius:5px;background:#fbfcfd;overflow:hidden"></div>
<div style="position:absolute;left:33px;top:568.5px;width:62.5px;height:28px;background:#e9edf3;border-radius:4px 0 0 4px"></div>
<div class="t" style="left:41.25px;top:577.00px;font-size:11.72px;font-weight:bold;color:#1a1c21;">Severity</div>
<div style="position:absolute;left:107px;top:579.5px;width:8.5px;height:8.5px;border-radius:50%;background:#c6e5f6"></div>
<div class="t" style="left:123.75px;top:576.00px;font-size:14.28px;font-weight:normal;color:#343741;">warning</div>
<svg style="position:absolute;left:181px;top:579px" width="11" height="8" viewBox="0 0 11 8"><path d="M1,1.5 L5.5,6 L10,1.5" fill="none" stroke="#343741" stroke-width="1.2"/></svg>
<div style="position:absolute;left:224.5px;top:567.5px;width:179px;height:30px;box-sizing:border-box;border:1px solid #dfe4ec;border-radius:5px;background:#fbfcfd;overflow:hidden"></div>
<div style="position:absolute;left:225.5px;top:568.5px;width:58.5px;height:28px;background:#e9edf3;border-radius:4px 0 0 4px"></div>
<div style="position:absolute;left:372px;top:568.5px;width:30.5px;height:28px;background:#e9edf3;border-radius:0 4px 4px 0"></div>
<div class="t" style="left:233.50px;top:578.00px;font-size:11.81px;font-weight:bold;color:#1a1c21;">Interval</div>
<div class="t" style="left:292.50px;top:575.00px;font-size:14.29px;font-weight:normal;color:#343741;">Auto</div>
<svg style="position:absolute;left:352px;top:578.5px" width="11" height="8" viewBox="0 0 11 8"><path d="M1,1.5 L5.5,6 L10,1.5" fill="none" stroke="#343741" stroke-width="1.2"/></svg>
<svg style="position:absolute;left:381px;top:576.5px" width="13" height="13" viewBox="0 0 16 16"><circle cx="8" cy="8" r="7" fill="none" stroke="#69707d" stroke-width="1.2"/><path d="M5.9,6.2 C5.9,4.9 6.9,4.2 8,4.2 C9.2,4.2 10.1,5 10.1,6.1 C10.1,7.4 8.1,7.6 8.1,9.4" fill="none" stroke="#69707d" stroke-width="1.2"/><circle cx="8.1" cy="11.7" r="0.9" fill="#69707d"/></svg>
<div class="t" style="left:67.50px;top:621.00px;font-size:11.9px;font-weight:bold;color:#1a1c21;">Time</div>
<div class="t" style="left:283.00px;top:621.00px;font-size:11.9px;font-weight:bold;color:#1a1c21;">Severity<svg style="display:inline-block;vertical-align:top;margin-left:1.5px;margin-top:-0.5px" width="9" height="9" viewBox="0 0 16 16"><circle cx="8" cy="8" r="7" fill="none" stroke="#98a2b3" stroke-width="1.4"/><path d="M5.8,6.2 C5.8,4.9 6.8,4.1 8,4.1 C9.3,4.1 10.2,5 10.2,6.1 C10.2,7.4 8.2,7.6 8.2,9.3" fill="none" stroke="#98a2b3" stroke-width="1.4"/><circle cx="8.2" cy="11.6" r="1" fill="#98a2b3"/></svg></div>
<div class="t" style="left:498.40px;top:621.00px;font-size:11.9px;font-weight:bold;color:#1a1c21;">Detector</div>
<div class="t" style="left:713.50px;top:621.00px;font-size:11.9px;font-weight:bold;color:#1a1c21;">Actual<svg style="display:inline-block;vertical-align:top;margin-left:1.5px;margin-top:-0.5px" width="9" height="9" viewBox="0 0 16 16"><circle cx="8" cy="8" r="7" fill="none" stroke="#98a2b3" stroke-width="1.4"/><path d="M5.8,6.2 C5.8,4.9 6.8,4.1 8,4.1 C9.3,4.1 10.2,5 10.2,6.1 C10.2,7.4 8.2,7.6 8.2,9.3" fill="none" stroke="#98a2b3" stroke-width="1.4"/><circle cx="8.2" cy="11.6" r="1" fill="#98a2b3"/></svg></div>
<div class="t" style="left:929.00px;top:621.00px;font-size:11.9px;font-weight:bold;color:#1a1c21;">Typical<svg style="display:inline-block;vertical-align:top;margin-left:1.5px;margin-top:-0.5px" width="9" height="9" viewBox="0 0 16 16"><circle cx="8" cy="8" r="7" fill="none" stroke="#98a2b3" stroke-width="1.4"/><path d="M5.8,6.2 C5.8,4.9 6.8,4.1 8,4.1 C9.3,4.1 10.2,5 10.2,6.1 C10.2,7.4 8.2,7.6 8.2,9.3" fill="none" stroke="#98a2b3" stroke-width="1.4"/><circle cx="8.2" cy="11.6" r="1" fill="#98a2b3"/></svg></div>
<div class="t" style="left:1145.00px;top:621.00px;font-size:11.9px;font-weight:bold;color:#1a1c21;">Description</div>
<div class="t" style="left:1360.60px;top:621.00px;font-size:11.9px;font-weight:bold;color:#1a1c21;">Actions</div>
<div style="position:absolute;left:32px;top:638.6px;width:1539.5px;height:1.3px;background:#d8dce4"></div>
<svg style="position:absolute;left:346px;top:622px" width="12" height="11" viewBox="0 0 12 11"><path d="M6,0.5 V10 M1.5,5.8 L6,10.2 L10.5,5.8" fill="none" stroke="#343741" stroke-width="1.2"/></svg>
<svg style="position:absolute;left:40.5px;top:653.8px" width="14" height="10" viewBox="0 0 14 10"><path d="M1.2,2 L7,7.8 L12.8,2" fill="none" stroke="#0b64b0" stroke-width="1.5"/></svg>
<div class="t" style="left:67.50px;top:653.00px;font-size:12.8px;font-weight:normal;color:#343741;">December 24th 2022</div>
<div style="position:absolute;left:286px;top:654.8px;width:8.2px;height:8.2px;border-radius:50%;background:#f22c3d"></div>
<div class="t" style="left:302.80px;top:653.00px;font-size:12.6px;font-weight:normal;color:#343741;letter-spacing:0.4px;">98</div>
<div class="t" style="left:498.40px;top:653.00px;font-size:12.6px;font-weight:normal;color:#343741;">count</div>
<div class="t" style="left:713.50px;top:653.00px;font-size:12.6px;font-weight:normal;color:#343741;letter-spacing:0.4px;">63</div>
<div class="t" style="left:929.00px;top:653.00px;font-size:12.6px;font-weight:normal;color:#343741;letter-spacing:0.4px;">6.23</div>
<svg style="position:absolute;left:1145px;top:654px" width="10" height="10" viewBox="0 0 10 10"><path d="M5,9.5 V1 M1.2,4.6 L5,0.8 L8.8,4.6" fill="none" stroke="#343741" stroke-width="1.1"/></svg>
<div class="t" style="left:1165.60px;top:653.00px;font-size:12.6px;font-weight:normal;color:#343741;">10x higher</div>
<svg style="position:absolute;left:1367.6px;top:650.8px" width="16" height="16" viewBox="0 0 16 16"><path d="M6.61,0.83 L9.39,0.83 L10.20,3.29 L10.98,3.74 L13.51,3.21 L14.90,5.62 L13.18,7.55 L13.18,8.45 L14.90,10.38 L13.51,12.79 L10.98,12.26 L10.20,12.71 L9.39,15.17 L6.61,15.17 L5.80,12.71 L5.02,12.26 L2.49,12.79 L1.10,10.38 L2.82,8.45 L2.82,7.55 L1.10,5.62 L2.49,3.21 L5.02,3.74 L5.80,3.29Z" fill="none" stroke="#535966" stroke-width="1.15" stroke-linejoin="round"/><circle cx="8" cy="8" r="2.6" fill="none" stroke="#535966" stroke-width="1.15"/></svg>
<div style="position:absolute;left:32px;top:678.6px;width:1539.5px;height:1.2px;background:#dcdfe6"></div>
<div style="position:absolute;left:32px;top:679.7px;width:1539px;height:254.5px;background:#f9fafc"></div>
<div style="position:absolute;left:32px;top:933.9px;width:1539.5px;height:1.2px;background:#dcdfe6"></div>
<div class="t" style="left:48.00px;top:698.00px;font-size:11.9px;font-weight:bold;color:#1a1c21;">Description</div>
<div class="t" style="left:48.00px;top:713.00px;font-size:12.48px;font-weight:normal;color:#343741;">Critical anomaly in count</div>
<div class="t" style="left:48.00px;top:745.00px;font-size:11.94px;font-weight:bold;color:#1a1c21;">Details on highest severity anomaly</div>
<div class="t" style="left:48.00px;top:764.00px;font-size:12.6px;font-weight:normal;color:#343741;">Time</div>
<div class="t" style="left:223.75px;top:764.00px;font-size:12.98px;font-weight:normal;color:#343741;">December 24th 2022, 12:30:00 to December 24th 2022, 12:45:00</div>
<div class="t" style="left:48.00px;top:783.00px;font-size:12.6px;font-weight:normal;color:#343741;">Function</div>
<div class="t" style="left:223.75px;top:783.00px;font-size:12.6px;font-weight:normal;color:#343741;">count</div>
<div class="t" style="left:48.00px;top:803.00px;font-size:12.6px;font-weight:normal;color:#343741;">Actual</div>
<div class="t" style="left:223.75px;top:803.00px;font-size:12.6px;font-weight:normal;color:#343741;letter-spacing:0.4px;">63</div>
<div class="t" style="left:48.00px;top:823.00px;font-size:12.6px;font-weight:normal;color:#343741;">Typical</div>
<div class="t" style="left:223.75px;top:823.00px;font-size:12.6px;font-weight:normal;color:#343741;letter-spacing:0.4px;">6.23</div>
<div class="t" style="left:48.00px;top:842.00px;font-size:12.6px;font-weight:normal;color:#343741;">Job ID</div>
<div class="t" style="left:223.75px;top:842.00px;font-size:12.6px;font-weight:normal;color:#343741;">data-logs-2</div>
<div class="t" style="left:48.00px;top:862.00px;font-size:12.6px;font-weight:normal;color:#343741;">Record score<svg style="display:inline-block;vertical-align:top;margin-left:1.5px;margin-top:-0.5px" width="9" height="9" viewBox="0 0 16 16"><circle cx="8" cy="8" r="7" fill="none" stroke="#98a2b3" stroke-width="1.4"/><path d="M5.8,6.2 C5.8,4.9 6.8,4.1 8,4.1 C9.3,4.1 10.2,5 10.2,6.1 C10.2,7.4 8.2,7.6 8.2,9.3" fill="none" stroke="#98a2b3" stroke-width="1.4"/><circle cx="8.2" cy="11.6" r="1" fill="#98a2b3"/></svg></div>
<div class="t" style="left:223.75px;top:862.00px;font-size:12.6px;font-weight:normal;color:#343741;letter-spacing:0.4px;">98.233</div>
<div class="t" style="left:48.00px;top:881.00px;font-size:12.6px;font-weight:normal;color:#343741;">Initial record score<svg style="display:inline-block;vertical-align:top;margin-left:1.5px;margin-top:-0.5px" width="9" height="9" viewBox="0 0 16 16"><circle cx="8" cy="8" r="7" fill="none" stroke="#98a2b3" stroke-width="1.4"/><path d="M5.8,6.2 C5.8,4.9 6.8,4.1 8,4.1 C9.3,4.1 10.2,5 10.2,6.1 C10.2,7.4 8.2,7.6 8.2,9.3" fill="none" stroke="#98a2b3" stroke-width="1.4"/><circle cx="8.2" cy="11.6" r="1" fill="#98a2b3"/></svg></div>
<div class="t" style="left:223.75px;top:881.00px;font-size:12.6px;font-weight:normal;color:#343741;letter-spacing:0.4px;">98.233</div>
<div class="t" style="left:48.00px;top:901.00px;font-size:12.6px;font-weight:normal;color:#343741;">Probability</div>
<div class="t" style="left:223.75px;top:901.00px;font-size:12.6px;font-weight:normal;color:#343741;letter-spacing:0.4px;">4.64e-12</div>
<div style="position:absolute;left:789.5px;top:742.5px;width:1.2px;height:175px;background:#dcdfe6"></div>
<div class="t" style="left:814.50px;top:745.00px;font-size:11.96px;font-weight:bold;color:#1a1c21;">Anomaly explanation</div>
<div class="t" style="left:814.50px;top:768.00px;font-size:12.59px;font-weight:normal;color:#343741;">Anomaly type</div>
<div class="t" style="left:1029.50px;top:768.00px;font-size:12.6px;font-weight:normal;color:#343741;">Spike over 1 bucket</div>
<div class="t" style="left:814.50px;top:796.00px;font-size:11.96px;font-weight:bold;color:#1a1c21;">Impact on initial score</div>
<div class="t" style="left:814.50px;top:819.00px;font-size:12.59px;font-weight:normal;color:#343741;">Anomaly characteristics impact<svg style="display:inline-block;vertical-align:top;margin-left:1.5px;margin-top:-0.5px" width="9" height="9" viewBox="0 0 16 16"><circle cx="8" cy="8" r="7" fill="none" stroke="#98a2b3" stroke-width="1.4"/><path d="M5.8,6.2 C5.8,4.9 6.8,4.1 8,4.1 C9.3,4.1 10.2,5 10.2,6.1 C10.2,7.4 8.2,7.6 8.2,9.3" fill="none" stroke="#98a2b3" stroke-width="1.4"/><circle cx="8.2" cy="11.6" r="1" fill="#98a2b3"/></svg></div>
<div style="position:absolute;left:1029.5px;top:817.0px;width:9.5px;height:9px;background:#0b72c5;border-radius:2px"></div>
<div style="position:absolute;left:1043.25px;top:817.0px;width:9.5px;height:9px;background:#0b72c5;border-radius:2px"></div>
<div style="position:absolute;left:1057.0px;top:817.0px;width:9.5px;height:9px;background:#0b72c5;border-radius:2px"></div>
<div style="position:absolute;left:1070.75px;top:817.0px;width:9.5px;height:9px;background:#0b72c5;border-radius:2px"></div>
<div style="position:absolute;left:1084.5px;top:817.0px;width:9.5px;height:9px;background:#d3dae6;border-radius:2px"></div>
<div class="t" style="left:814.50px;top:838.00px;font-size:12.59px;font-weight:normal;color:#343741;">Single bucket impact<svg style="display:inline-block;vertical-align:top;margin-left:1.5px;margin-top:-0.5px" width="9" height="9" viewBox="0 0 16 16"><circle cx="8" cy="8" r="7" fill="none" stroke="#98a2b3" stroke-width="1.4"/><path d="M5.8,6.2 C5.8,4.9 6.8,4.1 8,4.1 C9.3,4.1 10.2,5 10.2,6.1 C10.2,7.4 8.2,7.6 8.2,9.3" fill="none" stroke="#98a2b3" stroke-width="1.4"/><circle cx="8.2" cy="11.6" r="1" fill="#98a2b3"/></svg></div>
<div style="position:absolute;left:1029.5px;top:836.25px;width:9.5px;height:9px;background:#0b72c5;border-radius:2px"></div>
<div style="position:absolute;left:1043.25px;top:836.25px;width:9.5px;height:9px;background:#0b72c5;border-radius:2px"></div>
<div style="position:absolute;left:1057.0px;top:836.25px;width:9.5px;height:9px;background:#0b72c5;border-radius:2px"></div>
<div style="position:absolute;left:1070.75px;top:836.25px;width:9.5px;height:9px;background:#0b72c5;border-radius:2px"></div>
<div style="position:absolute;left:1084.5px;top:836.25px;width:9.5px;height:9px;background:#0b72c5;border-radius:2px"></div>
<div class="t" style="left:814.50px;top:858.00px;font-size:12.59px;font-weight:normal;color:#343741;">High variance interval<svg style="display:inline-block;vertical-align:top;margin-left:1.5px;margin-top:-0.5px" width="9" height="9" viewBox="0 0 16 16"><circle cx="8" cy="8" r="7" fill="none" stroke="#98a2b3" stroke-width="1.4"/><path d="M5.8,6.2 C5.8,4.9 6.8,4.1 8,4.1 C9.3,4.1 10.2,5 10.2,6.1 C10.2,7.4 8.2,7.6 8.2,9.3" fill="none" stroke="#98a2b3" stroke-width="1.4"/><circle cx="8.2" cy="11.6" r="1" fill="#98a2b3"/></svg></div>
<div class="t" style="left:1029.50px;top:858.00px;font-size:12.6px;font-weight:normal;color:#343741;">Yes</div>
<svg style="position:absolute;left:40.5px;top:949.8px" width="14" height="10" viewBox="0 0 14 10"><path d="M1.2,2 L7,7.8 L12.8,2" fill="none" stroke="#0b64b0" stroke-width="1.5"/></svg>
<div class="t" style="left:67.50px;top:949.00px;font-size:12.8px;font-weight:normal;color:#343741;">December 13th 2022</div>
<svg style="position:absolute;left:284.5px;top:949.2px" width="11" height="11" viewBox="0 0 11 11"><path d="M4,0 h3 v4 h4 v3 h-4 v4 h-3 v-4 h-4 v-3 h4 Z" fill="#5fb9ee"/></svg>
<div class="t" style="left:302.80px;top:949.00px;font-size:12.6px;font-weight:normal;color:#343741;letter-spacing:0.4px;">24</div>
<div class="t" style="left:498.40px;top:949.00px;font-size:12.6px;font-weight:normal;color:#343741;">count</div>
<div class="t" style="left:713.50px;top:949.00px;font-size:12.6px;font-weight:normal;color:#343741;">4</div>
<div class="t" style="left:929.00px;top:949.00px;font-size:12.6px;font-weight:normal;color:#343741;letter-spacing:0.4px;">4.9</div>
<svg style="position:absolute;left:1145px;top:950px" width="10" height="10" viewBox="0 0 10 10"><path d="M5,0.5 V9 M1.2,5.4 L5,9.2 L8.8,5.4" fill="none" stroke="#343741" stroke-width="1.1"/></svg>
<div class="t" style="left:1165.60px;top:949.00px;font-size:12.6px;font-weight:normal;color:#343741;">1.2x lower</div>
<svg style="position:absolute;left:1367.6px;top:946.8px" width="16" height="16" viewBox="0 0 16 16"><path d="M6.61,0.83 L9.39,0.83 L10.20,3.29 L10.98,3.74 L13.51,3.21 L14.90,5.62 L13.18,7.55 L13.18,8.45 L14.90,10.38 L13.51,12.79 L10.98,12.26 L10.20,12.71 L9.39,15.17 L6.61,15.17 L5.80,12.71 L5.02,12.26 L2.49,12.79 L1.10,10.38 L2.82,8.45 L2.82,7.55 L1.10,5.62 L2.49,3.21 L5.02,3.74 L5.80,3.29Z" fill="none" stroke="#535966" stroke-width="1.15" stroke-linejoin="round"/><circle cx="8" cy="8" r="2.6" fill="none" stroke="#535966" stroke-width="1.15"/></svg>
<div style="position:absolute;left:32px;top:974.6px;width:1539.5px;height:1.2px;background:#dcdfe6"></div>
<div style="position:absolute;left:32px;top:975.7px;width:1539px;height:254.5px;background:#f9fafc"></div>
<div style="position:absolute;left:32px;top:1229.9px;width:1539.5px;height:1.2px;background:#dcdfe6"></div>
<div class="t" style="left:48.00px;top:994.00px;font-size:11.9px;font-weight:bold;color:#1a1c21;">Description</div>
<div class="t" style="left:48.00px;top:1009.00px;font-size:12.48px;font-weight:normal;color:#343741;">Warning anomaly in count</div>
<div class="t" style="left:48.00px;top:1041.00px;font-size:11.94px;font-weight:bold;color:#1a1c21;">Details on highest severity anomaly</div>
<div class="t" style="left:48.00px;top:1060.00px;font-size:12.6px;font-weight:normal;color:#343741;">Time</div>
<div class="t" style="left:223.75px;top:1060.00px;font-size:12.98px;font-weight:normal;color:#343741;">December 13th 2022, 13:45:00 to December 13th 2022, 14:00:00</div>
<div class="t" style="left:48.00px;top:1079.00px;font-size:12.6px;font-weight:normal;color:#343741;">Function</div>
<div class="t" style="left:223.75px;top:1079.00px;font-size:12.6px;font-weight:normal;color:#343741;">count</div>
<div class="t" style="left:48.00px;top:1099.00px;font-size:12.6px;font-weight:normal;color:#343741;">Actual</div>
<div class="t" style="left:223.75px;top:1099.00px;font-size:12.6px;font-weight:normal;color:#343741;">4</div>
<div class="t" style="left:48.00px;top:1119.00px;font-size:12.6px;font-weight:normal;color:#343741;">Typical</div>
<div class="t" style="left:223.75px;top:1119.00px;font-size:12.6px;font-weight:normal;color:#343741;letter-spacing:0.4px;">4.9</div>
<div class="t" style="left:48.00px;top:1138.00px;font-size:12.6px;font-weight:normal;color:#343741;">Job ID</div>
<div class="t" style="left:223.75px;top:1138.00px;font-size:12.6px;font-weight:normal;color:#343741;">data-logs-2</div>
<div class="t" style="left:48.00px;top:1158.00px;font-size:12.6px;font-weight:normal;color:#343741;">Record score<svg style="display:inline-block;vertical-align:top;margin-left:1.5px;margin-top:-0.5px" width="9" height="9" viewBox="0 0 16 16"><circle cx="8" cy="8" r="7" fill="none" stroke="#98a2b3" stroke-width="1.4"/><path d="M5.8,6.2 C5.8,4.9 6.8,4.1 8,4.1 C9.3,4.1 10.2,5 10.2,6.1 C10.2,7.4 8.2,7.6 8.2,9.3" fill="none" stroke="#98a2b3" stroke-width="1.4"/><circle cx="8.2" cy="11.6" r="1" fill="#98a2b3"/></svg></div>
<div class="t" style="left:223.75px;top:1158.00px;font-size:12.6px;font-weight:normal;color:#343741;letter-spacing:0.4px;">24.527</div>
<div class="t" style="left:48.00px;top:1177.00px;font-size:12.6px;font-weight:normal;color:#343741;">Initial record score<svg style="display:inline-block;vertical-align:top;margin-left:1.5px;margin-top:-0.5px" width="9" height="9" viewBox="0 0 16 16"><circle cx="8" cy="8" r="7" fill="none" stroke="#98a2b3" stroke-width="1.4"/><path d="M5.8,6.2 C5.8,4.9 6.8,4.1 8,4.1 C9.3,4.1 10.2,5 10.2,6.1 C10.2,7.4 8.2,7.6 8.2,9.3" fill="none" stroke="#98a2b3" stroke-width="1.4"/><circle cx="8.2" cy="11.6" r="1" fill="#98a2b3"/></svg></div>
<div class="t" style="left:223.75px;top:1177.00px;font-size:12.6px;font-weight:normal;color:#343741;letter-spacing:0.4px;">97.598</div>
<div class="t" style="left:48.00px;top:1197.00px;font-size:12.6px;font-weight:normal;color:#343741;">Probability</div>
<div class="t" style="left:223.75px;top:1197.00px;font-size:12.6px;font-weight:normal;color:#343741;letter-spacing:0.4px;">0.0000759</div>
<div style="position:absolute;left:789.5px;top:1038.5px;width:1.2px;height:175px;background:#dcdfe6"></div>
<div class="t" style="left:814.50px;top:1041.00px;font-size:11.96px;font-weight:bold;color:#1a1c21;">Anomaly explanation</div>
<div class="t" style="left:814.50px;top:1064.00px;font-size:12.59px;font-weight:normal;color:#343741;">Record score reduction<svg style="display:inline-block;vertical-align:top;margin-left:1.5px;margin-top:-0.5px" width="9" height="9" viewBox="0 0 16 16"><circle cx="8" cy="8" r="7" fill="none" stroke="#98a2b3" stroke-width="1.4"/><path d="M5.8,6.2 C5.8,4.9 6.8,4.1 8,4.1 C9.3,4.1 10.2,5 10.2,6.1 C10.2,7.4 8.2,7.6 8.2,9.3" fill="none" stroke="#98a2b3" stroke-width="1.4"/><circle cx="8.2" cy="11.6" r="1" fill="#98a2b3"/></svg></div>
<div class="t" style="left:1029.50px;top:1064.00px;font-size:12.6px;font-weight:normal;color:#343741;letter-spacing:0.4px;">97.598</div>
<div style="position:absolute;left:1029.5px;top:1076.3px;width:40.8px;height:2px;background:#e7444f"></div>
<svg style="position:absolute;left:1075.5px;top:1065.0px" width="10" height="9" viewBox="0 0 10 9"><path d="M0.5,4.5 H9 M5.3,0.9 L9,4.5 L5.3,8.1" fill="none" stroke="#343741" stroke-width="1.2"/></svg>
<div class="t" style="left:1090.00px;top:1064.00px;font-size:12.6px;font-weight:normal;color:#343741;letter-spacing:0.4px;">24.527</div>
<div style="position:absolute;left:1089.8px;top:1076.3px;width:40.8px;height:2px;background:#61b9e2"></div>
<div class="t" style="left:814.50px;top:1093.00px;font-size:11.96px;font-weight:bold;color:#1a1c21;">Impact on initial score</div>
<div class="t" style="left:814.50px;top:1116.00px;font-size:12.59px;font-weight:normal;color:#343741;">Multi bucket impact<svg style="display:inline-block;vertical-align:top;margin-left:1.5px;margin-top:-0.5px" width="9" height="9" viewBox="0 0 16 16"><circle cx="8" cy="8" r="7" fill="none" stroke="#98a2b3" stroke-width="1.4"/><path d="M5.8,6.2 C5.8,4.9 6.8,4.1 8,4.1 C9.3,4.1 10.2,5 10.2,6.1 C10.2,7.4 8.2,7.6 8.2,9.3" fill="none" stroke="#98a2b3" stroke-width="1.4"/><circle cx="8.2" cy="11.6" r="1" fill="#98a2b3"/></svg></div>
<div style="position:absolute;left:1029.5px;top:1114.25px;width:9.5px;height:9px;background:#0b72c5;border-radius:2px"></div>
<div style="position:absolute;left:1043.25px;top:1114.25px;width:9.5px;height:9px;background:#0b72c5;border-radius:2px"></div>
<div style="position:absolute;left:1057.0px;top:1114.25px;width:9.5px;height:9px;background:#0b72c5;border-radius:2px"></div>
<div style="position:absolute;left:1070.75px;top:1114.25px;width:9.5px;height:9px;background:#0b72c5;border-radius:2px"></div>
<div style="position:absolute;left:1084.5px;top:1114.25px;width:9.5px;height:9px;background:#d3dae6;border-radius:2px"></div>
<div class="t" style="left:814.50px;top:1136.00px;font-size:12.59px;font-weight:normal;color:#343741;">High variance interval<svg style="display:inline-block;vertical-align:top;margin-left:1.5px;margin-top:-0.5px" width="9" height="9" viewBox="0 0 16 16"><circle cx="8" cy="8" r="7" fill="none" stroke="#98a2b3" stroke-width="1.4"/><path d="M5.8,6.2 C5.8,4.9 6.8,4.1 8,4.1 C9.3,4.1 10.2,5 10.2,6.1 C10.2,7.4 8.2,7.6 8.2,9.3" fill="none" stroke="#98a2b3" stroke-width="1.4"/><circle cx="8.2" cy="11.6" r="1" fill="#98a2b3"/></svg></div>
<div class="t" style="left:1029.50px;top:1136.00px;font-size:12.6px;font-weight:normal;color:#343741;">Yes</div>
</body></html>
